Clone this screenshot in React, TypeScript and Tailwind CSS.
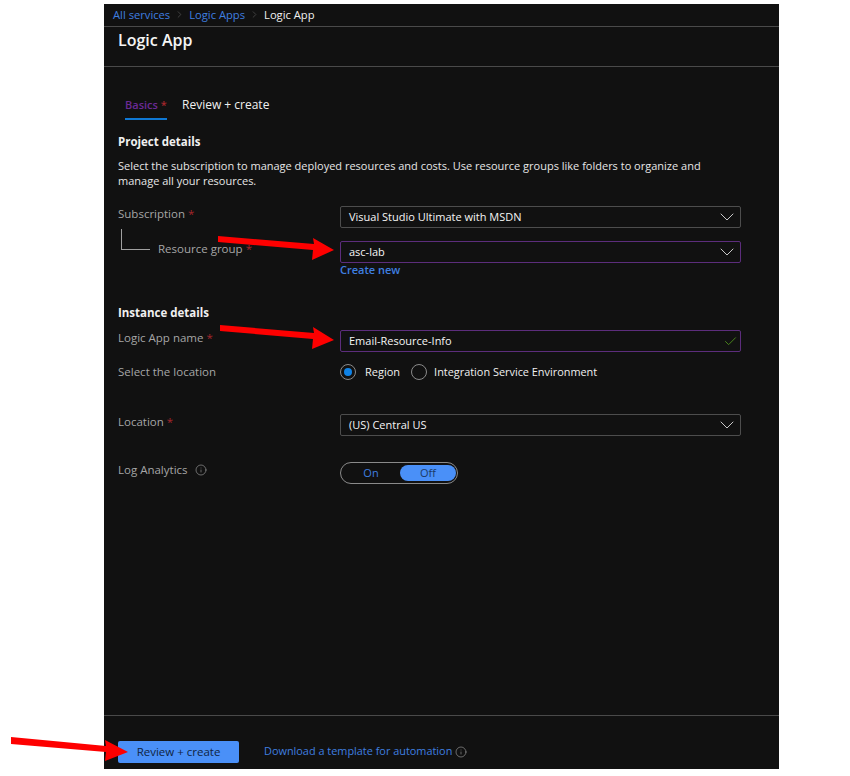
import { ChevronDown, Check, Info, ChevronRight } from "lucide-react";

function Req() {
  return <span className="text-[#a4262c] ml-[3px]">*</span>;
}

function Select({ value, active }: { value: string; active?: boolean }) {
  return (
    <div
      className={`w-[401px] h-[22px] flex items-center justify-between pl-2 pr-[1px] border rounded-[2px] text-[11px] text-[#f5f5f5] ${
        active ? "border-[#5c2d7c]" : "border-[#4d4d4d]"
      }`}
    >
      <span>{value}</span>
      <ChevronDown size={24} strokeWidth={1} className="text-[#c8c8c8] -my-1" />
    </div>
  );
}

function Arrows() {
  return (
    <svg className="absolute left-0 top-0 pointer-events-none" width="850" height="776">
      <polygon fill="#fe0000" points="218,236 314,244 313,238 334,250 312,260 313,250 218,242" />
      <polygon fill="#fe0000" points="220,325 314,333 313,327 334,340 312,349 313,339 220,331" />
      <polygon fill="#fe0000" points="11,737 106,746 105,740 128,752 105,761 106,752 11,744" />
    </svg>
  );
}

export default function App() {
  return (
    <div className="relative w-[850px] h-[776px] bg-white overflow-hidden font-['Open_Sans',sans-serif] text-[11.5px] leading-[16px]">
      <Arrows />
      <div className="ml-[104px] pt-1">
        <div className="w-[675px] h-[765px] bg-[#111111] flex flex-col">
          <div className="h-[23px] shrink-0 border-b border-[#4a4a4a] pl-[9px] flex items-center gap-[4px] pb-[1px] text-[11.2px]">
            <span className="text-[#3f7fe0]">All services</span>
            <ChevronRight size={11} strokeWidth={1} className="text-[#777]" />
            <span className="text-[#3f7fe0]">Logic Apps</span>
            <ChevronRight size={11} strokeWidth={1} className="text-[#777]" />
            <span className="text-[#f0f0f0]">Logic App</span>
          </div>
          <div className="h-[40px] shrink-0 border-b border-[#4a4a4a] pl-[14px] pt-[3px] text-[16px] leading-[20px] font-semibold text-[#f5f5f5]">
            Logic App
          </div>

          <div className="flex-1 pl-[14px]">
            <div className="flex mt-[29px] h-[24px] ml-[7px] gap-[15px] pt-[1px]">
              <div className="w-[42px] h-[23px] border-b-2 border-[#0f78d4] text-[#6b2a96] whitespace-nowrap font-semibold text-[11px]">
                Basics <span className="text-[#a4262c]">*</span>
              </div>
              <div className="text-[#f0f0f0] text-[12px]">Review + create</div>
            </div>

            <div className="mt-[14px] font-bold text-[#f0f0f0]">Project details</div>
            <p className="mt-[8px] w-[600px] leading-[15px] text-[11px] text-[#e6e6e6]">
              Select the subscription to manage deployed resources and costs. Use resource groups like folders to organize and manage all your resources.
            </p>

            <div className="mt-[18px] flex">
              <div className="w-[222px] text-[#a6a6a6]">
                Subscription<Req />
              </div>
              <Select value="Visual Studio Ultimate with MSDN" />
            </div>
            <div className="mt-[13px] flex">
              <div className="w-[222px] flex text-[#a6a6a6]">
                <div className="ml-[3px] -mt-[12px] w-[29px] h-[21px] border-l border-b border-[#a0a0a0]" />
                <div className="ml-[8px]">
                  Resource group<Req />
                </div>
              </div>
              <Select value="asc-lab" active />
            </div>
            <div className="ml-[222px] -mt-[1px] font-semibold text-[11px] text-[#3f7fe0]">Create new</div>

            <div className="mt-[27px] font-bold text-[#f0f0f0]">Instance details</div>
            <div className="mt-[9px] flex">
              <div className="w-[222px] text-[#a6a6a6]">
                Logic App name<Req />
              </div>
              <div className="w-[401px] h-[22px] flex items-center justify-between pl-2 pr-[2px] border border-[#5c2d7c] rounded-[2px] text-[11px] text-[#f5f5f5]">
                <span>Email-Resource-Info</span>
                <Check size={15} strokeWidth={1.5} className="text-[#4c8a1c]" />
              </div>
            </div>

            <div className="mt-[12px] flex items-center h-[16px]">
              <div className="w-[222px] text-[#a6a6a6]">Select the location</div>
              <div className="w-[16px] h-[16px] rounded-full border border-[#8a8a8a] flex items-center justify-center">
                <div className="w-[8px] h-[8px] rounded-full bg-[#0f82e6]" />
              </div>
              <span className="ml-[9px] text-[11px] text-[#f0f0f0]">Region</span>
              <div className="ml-[11px] w-[16px] h-[16px] rounded-full border border-[#8a8a8a]" />
              <span className="ml-[7px] text-[10.9px] text-[#f0f0f0]">Integration Service Environment</span>
            </div>

            <div className="mt-[34px] flex">
              <div className="w-[222px] text-[#a6a6a6]">
                Location<Req />
              </div>
              <Select value="(US) Central US" />
            </div>

            <div className="mt-[26px] flex">
              <div className="w-[222px] text-[#a6a6a6] flex items-start gap-[7px]">
                Log Analytics
                <Info size={12} strokeWidth={1.2} className="mt-[2px] text-[#a6a6a6]" />
              </div>
              <div className="w-[118px] h-[22px] border border-[#8a8a8a] rounded-full flex items-center pl-[1px] pr-[1px]">
                <div className="flex-1 text-center text-[11px] text-[#3f7fe0]">On</div>
                <div className="w-[56px] h-[16px] rounded-full bg-[#4a90f8] text-center text-[11px] text-[#1c3a66] leading-[16px]">
                  Off
                </div>
              </div>
            </div>
          </div>

          <div className="h-[54px] shrink-0 border-t border-[#4a4a4a] pl-[14px] pt-[25px] flex items-start">
            <div className="w-[121px] h-[22px] rounded-[2px] bg-[#4a90f8] text-[#10243f] flex items-center justify-center">
              Review + create
            </div>
            <span className="ml-[25px] mt-[2px] text-[10.9px] text-[#3f7fe0]">Download a template for automation</span>
            <Info size={12} strokeWidth={1.2} className="ml-[3px] mt-[5px] text-[#a6a6a6]" />
          </div>
        </div>
      </div>
    </div>
  );
}
